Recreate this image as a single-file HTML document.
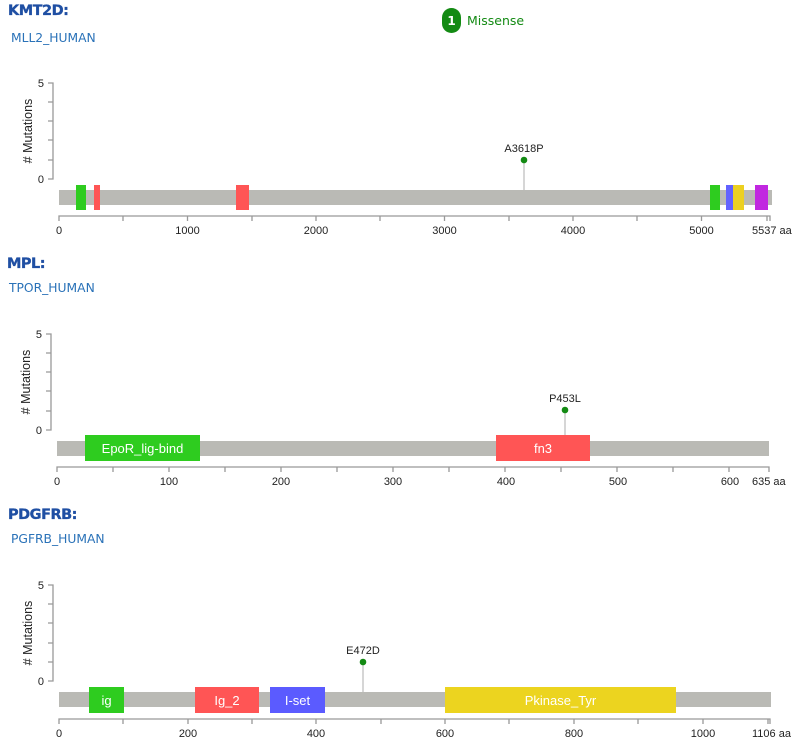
<!DOCTYPE html>
<html><head><meta charset="utf-8"><style>
html,body{margin:0;padding:0;background:#fff;}
svg{display:block;}
.t{font-family:"DejaVu Sans",Verdana,sans-serif;font-weight:bold;font-size:14.5px;fill:#1f4fa3;letter-spacing:-0.5px;stroke:#1f4fa3;stroke-width:0.3}
.s{font-family:"DejaVu Sans",Verdana,sans-serif;font-size:12.3px;fill:#2a72b8}
.a{font-family:"Liberation Sans",Arial,sans-serif;font-size:11px;fill:#222}
.d{font-family:"Liberation Sans",Arial,sans-serif;font-size:13px;fill:#fff}
.y{font-family:"Liberation Sans",Arial,sans-serif;font-size:12.5px;fill:#222}
.ax{stroke:#999;stroke-width:1.3;fill:none}
</style></head><body>
<svg width="795" height="742" viewBox="0 0 795 742" xmlns="http://www.w3.org/2000/svg">
<rect x="442" y="8" width="19" height="25" rx="9.5" fill="#138a13"/>
<text x="451.5" y="25" text-anchor="middle" style="font-family:'DejaVu Sans',sans-serif;font-weight:bold;font-size:12px;fill:#fff">1</text>
<text x="467" y="25" style="font-family:'DejaVu Sans',sans-serif;font-size:12.5px;fill:#138a13">Missense</text>

<!-- KMT2D -->
<text x="8" y="15" class="t">KMT2D:</text>
<text x="11" y="42" class="s">MLL2_HUMAN</text>
<path class="ax" d="M48 83H53V179H48M48 102H53M48 121H53M48 140H53M48 160H53"/>
<text x="44" y="87" class="a" text-anchor="end">5</text>
<text x="44" y="183" class="a" text-anchor="end">0</text>
<text transform="translate(32,131) rotate(-90)" class="y" text-anchor="middle"># Mutations</text>
<rect x="59" y="190" width="713" height="15" fill="#babab5"/>
<rect x="76" y="185" width="10" height="25" fill="#2ecc1f"/>
<rect x="94" y="185" width="6" height="25" fill="#ff5555"/>
<rect x="236" y="185" width="13" height="25" fill="#ff5555"/>
<rect x="710" y="185" width="10" height="25" fill="#2ecc1f"/>
<rect x="726" y="185" width="7" height="25" fill="#6262ff"/>
<rect x="733" y="185" width="11" height="25" fill="#ecd020"/>
<rect x="755" y="185" width="13" height="25" fill="#c128e0"/>
<line x1="524" y1="160" x2="524" y2="190" stroke="#bbb" stroke-width="1.2"/>
<circle cx="524" cy="160" r="3.3" fill="#138a13"/>
<text x="524" y="152" class="a" text-anchor="middle">A3618P</text>
<path class="ax" d="M59 221V216H770V221M123 216V221M187.5 216V221M252 216V221M316 216V221M380 216V221M444.5 216V221M509 216V221M573 216V221M637 216V221M701.5 216V221M767 216V221"/>
<g class="a" text-anchor="middle">
<text x="59" y="234">0</text><text x="187.5" y="234">1000</text><text x="316" y="234">2000</text><text x="444.5" y="234">3000</text><text x="573" y="234">4000</text><text x="701.5" y="234">5000</text>
</g>
<text x="752" y="234" class="a">5537 aa</text>

<!-- MPL -->
<text x="7" y="268" class="t">MPL:</text>
<text x="9" y="292" class="s">TPOR_HUMAN</text>
<path class="ax" d="M46 334H51V430H46M46 353H51M46 372H51M46 391H51M46 411H51"/>
<text x="42" y="338" class="a" text-anchor="end">5</text>
<text x="42" y="434" class="a" text-anchor="end">0</text>
<text transform="translate(30,382) rotate(-90)" class="y" text-anchor="middle"># Mutations</text>
<rect x="57" y="441" width="712" height="15" fill="#babab5"/>
<rect x="85" y="435" width="115" height="26" fill="#2ecc1f"/>
<text x="142.5" y="453" class="d" text-anchor="middle">EpoR_lig-bind</text>
<line x1="565" y1="410" x2="565" y2="441" stroke="#bbb" stroke-width="1.2"/>
<rect x="496" y="435" width="94" height="26" fill="#ff5555"/>
<text x="543" y="453" class="d" text-anchor="middle">fn3</text>
<circle cx="565" cy="410" r="3.3" fill="#138a13"/>
<text x="565" y="402" class="a" text-anchor="middle">P453L</text>
<path class="ax" d="M57 472V467H769V472M113 467V472M169 467V472M225 467V472M281 467V472M337 467V472M393 467V472M449 467V472M505 467V472M561 467V472M617 467V472M673 467V472M729 467V472"/>
<g class="a" text-anchor="middle">
<text x="57" y="485">0</text><text x="169" y="485">100</text><text x="281" y="485">200</text><text x="393" y="485">300</text><text x="506" y="485">400</text><text x="618" y="485">500</text><text x="730" y="485">600</text>
</g>
<text x="752" y="485" class="a">635 aa</text>

<!-- PDGFRB -->
<text x="8" y="519" class="t">PDGFRB:</text>
<text x="11" y="543" class="s">PGFRB_HUMAN</text>
<path class="ax" d="M48 585H53V681H48M48 604H53M48 623H53M48 643H53M48 662H53"/>
<text x="44" y="589" class="a" text-anchor="end">5</text>
<text x="44" y="685" class="a" text-anchor="end">0</text>
<text transform="translate(32,633) rotate(-90)" class="y" text-anchor="middle"># Mutations</text>
<rect x="59" y="692" width="712" height="15" fill="#babab5"/>
<rect x="89" y="687" width="35" height="26" fill="#2ecc1f"/>
<text x="106.5" y="705" class="d" text-anchor="middle">ig</text>
<rect x="195" y="687" width="64" height="26" fill="#ff5555"/>
<text x="227" y="705" class="d" text-anchor="middle">Ig_2</text>
<rect x="270" y="687" width="55" height="26" fill="#5b5bff"/>
<text x="297.5" y="705" class="d" text-anchor="middle">I-set</text>
<rect x="445" y="687" width="231" height="26" fill="#ecd41f"/>
<text x="560.5" y="705" class="d" text-anchor="middle">Pkinase_Tyr</text>
<line x1="363" y1="662" x2="363" y2="692" stroke="#bbb" stroke-width="1.2"/>
<circle cx="363" cy="662" r="3.3" fill="#138a13"/>
<text x="363" y="654" class="a" text-anchor="middle">E472D</text>
<path class="ax" d="M59 724V719H770V724M123 719V724M188 719V724M252 719V724M316 719V724M381 719V724M445 719V724M509 719V724M574 719V724M638 719V724M703 719V724M768 719V724"/>
<g class="a" text-anchor="middle">
<text x="59" y="737">0</text><text x="188" y="737">200</text><text x="316" y="737">400</text><text x="445" y="737">600</text><text x="574" y="737">800</text><text x="703" y="737">1000</text>
</g>
<text x="752" y="737" class="a">1106 aa</text>
</svg>
</body></html>
